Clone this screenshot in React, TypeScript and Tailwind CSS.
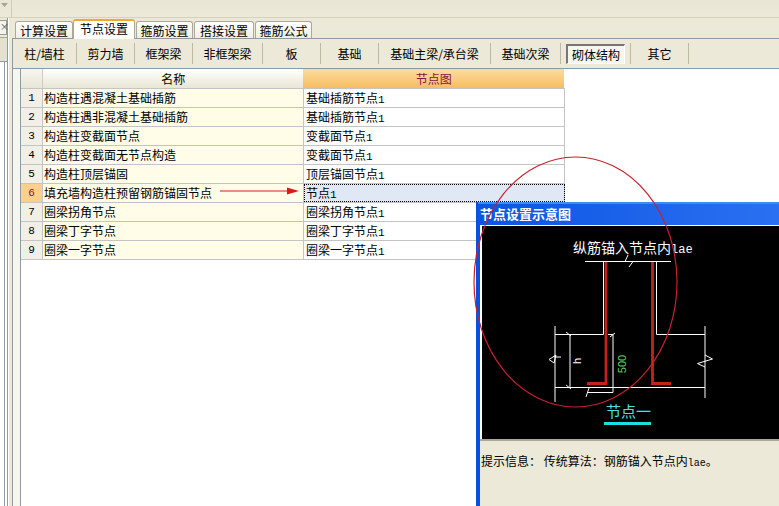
const font = `font-['Noto_Sans_CJK_SC','Liberation_Sans',sans-serif]`;

const tabs = [
  { label: "计算设置", cls: "w-[58px]" },
  { label: "节点设置", cls: "w-[62px]" },
  { label: "箍筋设置", cls: "w-[57px] ml-[1px]" },
  { label: "搭接设置", cls: "w-[60px] ml-[1px]" },
  { label: "箍筋公式", cls: "w-[57px] ml-[1px]" },
];
const subTabs = [
  { label: "柱/墙柱", w: "w-[64px]" },
  { label: "剪力墙", w: "w-[58px]" },
  { label: "框架梁", w: "w-[58px]" },
  { label: "非框架梁", w: "w-[70px]" },
  { label: "板", w: "w-[58px]" },
  { label: "基础", w: "w-[58px]" },
  { label: "基础主梁/承台梁", w: "w-[112px]" },
  { label: "基础次梁", w: "w-[70px]" },
  { label: "砌体结构", w: "w-[70px]" },
  { label: "其它", w: "w-[58px]" },
];
const rows = [
  ["构造柱遇混凝土基础插筋", "基础插筋节点"],
  ["构造柱遇非混凝土基础插筋", "基础插筋节点"],
  ["构造柱变截面节点", "变截面节点"],
  ["构造柱变截面无节点构造", "变截面节点"],
  ["构造柱顶层锚固", "顶层锚固节点"],
  ["填充墙构造柱预留钢筋锚固节点", "节点"],
  ["圈梁拐角节点", "圈梁拐角节点"],
  ["圈梁丁字节点", "圈梁丁字节点"],
  ["圈梁一字节点", "圈梁一字节点"],
];

function Diagram() {
  // viewBox uses page coordinates so the drawing can be read off the reference
  return (
    <svg width="297" height="213" viewBox="482 226 297 213" className="block">
      <g stroke="#fff" strokeWidth="1" fill="none">
        <path d="M585 261.5H671" />
        <path d="M628 255L625 261.5L633 261.5L629 267" />
        <path d="M603.5 262V334.5H555M656.5 262V334.5H705" />
        <path d="M555 326V402M705 326V398" />
        <path d="M555 387.5H705" />
        <path d="M570 334.5V387.5M566 332l5 4M566 385l5 4" />
        <path d="M608 334.5H613V392.5H587M610 337l5-4M586 397l3-9" />
        <path d="M549 359.5L556 355L554 363ZM554 357H561" />
        <path d="M705 355L712.5 359L697.5 363.5L705 367" />
      </g>
      <path d="M587 383.5H606V262M652.5 262V383.5H671" stroke="#c8201c" strokeWidth="2.8" fill="none" />
      <text x="578" y="364" fill="#fff" fontSize="11" fontFamily="Liberation Mono" textAnchor="middle" transform="rotate(-90 578 361)">h</text>
      <text x="621.5" y="368" fill="#5fd85f" fontSize="11" fontFamily="Liberation Sans" textAnchor="middle" transform="rotate(-90 621.5 364)">500</text>
      <rect x="604" y="422" width="47" height="3" fill="#19e0e0" />
    </svg>
  );
}

export default function App() {
  return (
    <div className={`relative w-[779px] h-[506px] overflow-hidden bg-[#ece9d8] text-black text-[12px] ${font}`}>
      <div className="h-[18px] border-b border-[#d6d2bd] bg-gradient-to-b from-[#e9e6d6] to-[#ece9d8]">
        <div className="w-[12px] h-[17px] border-r border-[#d0ccb8] pt-[3px] pl-[1px]">
          <svg width="7" height="4" viewBox="0 0 7 4" className="block">
            <path d="M0 0H7L3.5 4Z" fill="#a8a596" />
          </svg>
        </div>
      </div>
      <div className="flex h-[488px]">
        {/* left strip */}
        <div className="w-[12px] shrink-0">
          <div className="w-[8px] h-full flex flex-col border-r border-[#8f9ba3] shadow-[1px_0_0_#fff]">
            <div className="h-[2px]" />
            <div className="h-[15px] bg-[#f4f3ec] border-y border-r border-[#9c9a8c] text-[9px] leading-[12px] text-[#444]">×</div>
            <div className="h-[2px]" />
            <div className="h-[24px] border-t border-[#aca899] bg-[#e4e1d0]" />
            <div className="flex-1 bg-white border-t border-[#8f9ba3]">
              <div className="w-[5px] h-full border-r border-[#8f9ba3]" />
            </div>
          </div>
        </div>
        <div className="flex-1 flex flex-col min-w-0">
          <div className="flex h-[20px] items-end pl-[3px]">
            {tabs.map((t, i) => (
              <div
                key={t.label}
                className={
                  i === 1
                    ? `${t.cls} h-[20px] -mb-[1px] z-10 bg-white border-t-2 border-x border-t-[#f0a92e] border-x-[#aca899] rounded-t-[3px] text-center leading-[16px]`
                    : `${t.cls} h-[17px] border-t border-x border-[#aca899] rounded-t-[3px] bg-gradient-to-b from-white to-[#f0eee2] text-center leading-[17px]`
                }
              >
                {t.label}
              </div>
            ))}
          </div>
          <div className="flex-1 flex flex-col bg-[#f6f6ec] border-l border-t border-[#919b9c] min-h-0">
            <div className="h-[30px] shrink-0 bg-[#ece9d8] border-b border-[#8b99a5] flex items-center">
              {subTabs.map((s, i) => (
                <div
                  key={s.label}
                  className={`${s.w} h-[21px] shrink-0 flex items-center justify-center border-r border-[#bdb9a3]`}
                >
                  {i === 8 ? (
                    <span className="w-[59px] h-[20px] mt-[1px] flex items-center justify-center bg-[#f6f5ee] border-t-2 border-l-2 border-t-[#777] border-l-[#777] border-b border-r border-b-white border-r-white">
                      {s.label}
                    </span>
                  ) : (
                    s.label
                  )}
                </div>
              ))}
            </div>
            <div className="flex-1 ml-[7px] bg-white border-l border-[#8f9ba3]">
              <div className="w-[543px] flex h-[19px]">
                <div className="w-[22px] bg-gradient-to-b from-[#f7f6f0] to-[#e9e6d6] border-r border-[#ccc]" />
                <div className="w-[261px] bg-gradient-to-b from-white to-[#e9e6d4] text-center leading-[19px]">名称</div>
                <div className="w-[261px] bg-gradient-to-b from-[#fbdc9e] to-[#f7bd5f] text-center leading-[19px] text-[#8a1048]">节点图</div>
              </div>
              {rows.map((r, i) => (
                <div key={r[0]} className="w-[544px] flex h-[19px] border-t border-[#c4c4c4] leading-[18px]">
                  <div className={`w-[22px] text-center text-[11px] font-['Liberation_Mono'] border-r border-[#c4c4c4] ${i === 5 ? "bg-[#fbd088] text-[#8a1048]" : "bg-[#f1efe6]"}`}>
                    {i + 1}
                  </div>
                  <div className="w-[261px] bg-[#fffde8] border-r border-[#c4c4c4] pl-[1px]">{r[0]}</div>
                  <div className={`w-[261px] pl-[2px] border-r border-[#c4c4c4] ${i === 5 ? "bg-[#e0e8f5] outline-dotted outline-1 -outline-offset-1 outline-black" : "bg-white"}`}>
                    {r[1]}
                    <span className="font-['Liberation_Mono'] text-[11px]">1</span>
                  </div>
                </div>
              ))}
              <div className="w-[544px] border-t border-[#c4c4c4]" />
            </div>
          </div>
        </div>
      </div>

      {/* floating dialog */}
      <div className="absolute left-[476px] top-[202px] w-[303px] h-[304px] bg-[#ece9d8] border-l-[4px] border-[#0a50e0] flex flex-col">
        <div className="h-[23px] -ml-[2px] border-t-2 border-[#3c8cf5] bg-gradient-to-r from-[#0a55e2] to-[#2a70f2] text-white font-bold text-[13px] leading-[20px] pl-[2px] whitespace-nowrap">
          节点设置示意图
        </div>
        <div className="relative h-[214px] shrink-0 bg-black border-t border-l-2 border-white">
          <Diagram />
          <div className="absolute left-[91px] top-[12px] text-white text-[14px] leading-[18px] whitespace-nowrap">
            纵筋锚入节点内<span className="font-['Liberation_Mono'] text-[12px]">lae</span>
          </div>
          <div className="absolute left-[124px] top-[175px] text-[#4ee0e0] text-[15px] leading-[20px]">节点一</div>
        </div>
        <div className="pt-[12px] pl-[1px] text-[12px] leading-[16px] whitespace-nowrap border-t-2 border-[#aca899]">
          提示信息： 传统算法：钢筋锚入节点内<span className="font-['Liberation_Mono'] text-[10px]">lae</span>。
        </div>
      </div>

      {/* hand drawn annotation */}
      <svg className="absolute left-0 top-0 pointer-events-none" width="779" height="506" viewBox="0 0 779 506">
        <ellipse cx="575.5" cy="282" rx="101.5" ry="125" fill="none" stroke="#c8202c" strokeWidth="1.2" />
        <path d="M220 191H290" stroke="#d81c1c" strokeWidth="1" />
        <path d="M287 187.5L299 191L287 194.5Z" fill="#d81c1c" />
      </svg>
    </div>
  );
}
